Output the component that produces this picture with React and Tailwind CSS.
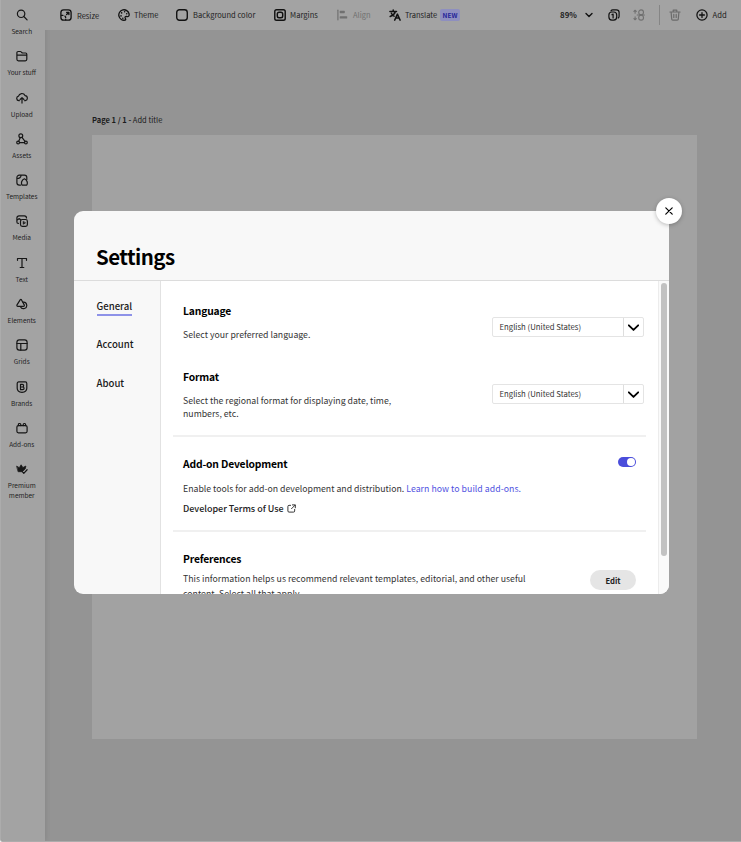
import React from "react";

const Svg = ({ children, className = "w-3 h-3", sw = 2 }) => (
  <svg viewBox="0 0 20 20" className={`${className} shrink-0`} fill="none" stroke="currentColor" strokeWidth={sw} strokeLinecap="round" strokeLinejoin="round">
    {children}
  </svg>
);

const icons = {
  search: <Svg><circle cx="8.500" cy="8" r="6.200" /><path d="M13 12.500l5.500 5.500" /></Svg>,
  folder: <Svg><path d="M1.500 15V4.500a2 2 0 0 1 2-2h3.600a2 2 0 0 1 1.500.7L10.500 5H16a2 2 0 0 1 2 2v8.500a2.500 2.500 0 0 1-2.500 2.500h-11.500a2.500 2.500 0 0 1-2.500-2.500zM1.500 8.500h16.500" /></Svg>,
  upload: <Svg><path d="M5.500 14.500H4.800a3.800 3.800 0 0 1-.6-7.500A5.700 5.700 0 0 1 15 6a4.300 4.300 0 0 1 .5 8.500H14.500M10 18.500V9.500M6.800 12.500L10 9.300 13.200 12.500" /></Svg>,
  assets: <Svg><circle cx="8" cy="4.500" r="3.200" /><circle cx="3.500" cy="16" r="2.300" /><circle cx="16.500" cy="16" r="2.300" /><path d="M7 7.800L4.500 13.800M10 7.300l5 6.500M6 16h8" /></Svg>,
  templates: <Svg><path d="M7.500 18.500H5.500a4 4 0 0 1-4-4V6a4 4 0 0 1 4-4h8.500a4 4 0 0 1 4 4v3M1.800 7.500c4 0 6.200-1.500 6.700-5.300" /><path d="M10 18.500c-2-4-.5-8.500 4-10.500 4.500 2 6 6.500 4 10.500z" /></Svg>,
  media: <Svg><path d="M4 14a2.500 2.500 0 0 1-2.500-2.500V5A3.500 3.500 0 0 1 5 1.500h9A3.500 3.500 0 0 1 17.500 5M2 8.500l3-2.500 3 2" /><rect x="7.500" y="7.500" width="11.500" height="11.500" rx="3" /><path d="M12 11v4.500l3.500-2.200z" fill="currentColor" strokeWidth="1" /></Svg>,
  text: <Svg><path d="M2.500 5.500V2.500h15v3M10 2.500v15M7 17.500h6" /></Svg>,
  elements: <Svg><path d="M7.200 2.800L1.700 11.500c-.7 1.300 0 2.500 1.500 2.500h9c1.500 0 2.200-1.200 1.500-2.500L9 2.800c-.5-.8-1.300-.8-1.800 0z" /><path d="M12 7a5.400 5.400 0 1 1-4.500 7.500" /></Svg>,
  grids: <Svg><rect x="1.500" y="1.500" width="17" height="17" rx="4" /><path d="M1.500 7.500h17M8 7.500v11" /></Svg>,
  brands: <Svg><path d="M2 4a2.500 2.500 0 0 1 2.500-2.500h11a2.500 2.500 0 0 1 2.500 2.500V12c0 4-4.500 6.500-8 7-3.500-.5-8-3-8-7z" /><path d="M7.500 5.500h3a2 2 0 0 1 0 4.500h-3zM7.500 10h3.700a2.200 2.200 0 0 1 0 4.500H7.500z" /></Svg>,
  addons: <Svg><rect x="1.500" y="6" width="17" height="12" rx="2.500" /><path d="M4 6V4a1.500 1.500 0 0 1 1.500-1.500h1A1.500 1.500 0 0 1 8 4v2M12 6V4a1.500 1.500 0 0 1 1.500-1.500h1A1.500 1.500 0 0 1 16 4v2" /></Svg>,
  premium: <Svg sw={1.2}><path d="M1.500 5.500l4 2.300L8.500 3l3 4.500L16.500 5l-1.200 5-5 4.500H4z" fill="currentColor" /><path d="M10.500 14.500l2.500 2.700 5.500-6" strokeWidth="2" /></Svg>,
};

const nav = [
  ["search", "Search"], ["folder", "Your stuff"], ["upload", "Upload"], ["assets", "Assets"],
  ["templates", "Templates"], ["media", "Media"], ["text", "Text"], ["elements", "Elements"],
  ["grids", "Grids"], ["brands", "Brands"], ["addons", "Add-ons"], ["premium", "Premium member"],
];

function Sidebar() {
  return (
    <nav className="flex h-full w-[44px] shrink-0 flex-col bg-[#a3a3a3] shadow-[1px_0_5px_rgba(0,0,0,0.09)]">
      {nav.map(([k, label]) => (
        <div key={k} className="flex h-[41.3px] shrink-0 flex-col items-center pt-[9px] pr-[2.5px] text-[#161616]">
          {icons[k]}
          <span className="mt-[5px] w-[40px] text-center text-[6.5px] leading-[10px] text-[#222]">{label}</span>
        </div>
      ))}
    </nav>
  );
}

function Toolbar() {
  const item = "flex shrink-0 items-center gap-1 whitespace-nowrap";
  return (
    <header className="flex h-[30px] shrink-0 items-center bg-[#a3a3a3] pl-[15px] text-[7.5px] leading-[12px] text-[#222]">
      <div className={`${item} w-[58px]`}>
        <Svg className="h-3 w-3 text-[#111]" sw={2.2}><rect x="1.500" y="1.500" width="17" height="17" rx="4.500" /><path d="M11 5.500h3.800v3.800M14.500 5.800l-3.500 3.500" /><path d="M2.500 10.500h2.500M8.200 11.800c1 .8 1.300 1.500 1.300 2.700M9.500 17.500v.5" /></Svg>
        <span className="relative top-[1px] pl-px">Resize</span>
      </div>
      <div className={`${item} w-[58px]`}>
        <Svg className="h-3 w-3 text-[#111]" sw={2.2}><path d="M18.500 8A8.700 8.700 0 1 0 12 18.500c1.500-.5.500-2.500 0-3.500-.8-2 .8-3 2.500-2.500 3 .8 4.500-1 4-4.500z" /><path d="M6 6.500h.1M11 4.500h.1M5 11.500h.1M8 15.500h.1M14.500 8h.1" strokeWidth="2.600" /></Svg>
        <span>Theme</span>
      </div>
      <div className={`${item} w-[98px]`}>
        <Svg className="h-3 w-3 text-[#111]" sw={2.3}><rect x="1.200" y="1.200" width="17.600" height="17.600" rx="4.500" /></Svg>
        <span className="pl-px tracking-[0.03px]">Background color</span>
      </div>
      <div className={`${item} w-[63px]`}>
        <Svg className="h-3 w-3 text-[#111]" sw={2.4}><rect x="1.300" y="1.300" width="17.400" height="17.400" rx="3" /><rect x="5.500" y="5.500" width="9" height="9" rx="3" /></Svg>
        <span className="tracking-[0.04px]">Margins</span>
      </div>
      <div className={`${item} w-[52px] text-[#707070]`}>
        <Svg className="h-3 w-3"><path d="M1.500 2v16" /><rect x="5.500" y="4" width="6.500" height="2" /><rect x="5.500" y="13" width="10.500" height="2" /></Svg>
        <span>Align</span>
      </div>
      <div className={`${item} w-[51px]`}>
        <Svg className="h-3 w-3 text-[#111]" sw={2.5}><path d="M1.500 4h11M7 1.500V4M10.500 4.500C9.500 8 6 11 2 12.500M4 7c1 2.500 2.500 4 4.500 5M9.500 18.500L14 8.500l4.500 10M11.200 15.200h5.600" /></Svg>
        <span>Translate</span>
      </div>
      <div className="flex h-3 w-5 items-center justify-center rounded-[2px] bg-[#8e8fc0] text-[6.500px] font-bold text-[#25259a]">NEW</div>
      <span className="ml-[100px] w-[25px] text-[7.900px] font-bold">89%</span>
      <Svg className="h-2 w-2 text-[#111]" sw={3.500}><path d="M2.500 6l7.500 7.500L17.500 6" /></Svg>
      <Svg className="ml-[15px] h-3 w-3 text-[#111]" sw={2}><rect x="1.500" y="5" width="13" height="13.500" rx="5" /><path d="M5 3a3.500 3.500 0 0 1 3-1.500h6A4.500 4.500 0 0 1 18.500 6v6a3.500 3.500 0 0 1-1.500 3M6.500 9.500L8.500 8.500v6.500" /></Svg>
      <Svg className="ml-[13px] h-3 w-3 text-[#707070]" sw={1.800}><path d="M3.500 2v5M1.500 4l2-2 2 2M3.500 13v5M1.500 16l2 2 2-2" /><circle cx="13.500" cy="5.500" r="4" /><circle cx="13.500" cy="14.500" r="4" /><path d="M7 10h12" /></Svg>
      <div className="ml-[14px] h-5 w-px bg-[#858585]" />
      <Svg className="ml-[9px] h-3 w-3 text-[#6b6b6b]"><path d="M1.500 5h17M7 5V2h6v3M3.500 5l1 11.500a2 2 0 0 0 2 2h7a2 2 0 0 0 2-2L16.500 5M8 9v5M12 9v5" /></Svg>
      <Svg className="ml-[15px] h-3 w-3 text-[#111]" sw={2.100}><circle cx="10" cy="10" r="8.500" /><path d="M10 6v8M6 10h8" /></Svg>
      <span className="ml-1 pl-[0.5px] text-[7.700px]">Add</span>
    </header>
  );
}

function Picker() {
  return (
    <div className="flex h-5 w-[152px] shrink-0 items-stretch rounded-[2px] border border-[#e4e4e4]">
      <span className="w-[130px] pl-[6.500px] text-[7.750px] leading-[17px] text-[#333]">English (United States)</span>
      <div className="w-px bg-[#dedede]" />
      <div className="flex flex-1 items-center justify-center pr-px text-black">
        <Svg className="h-[11px] w-[11px]" sw={3.300}><path d="M1.500 6l8.500 8.500L18.500 6" /></Svg>
      </div>
    </div>
  );
}

const H = ({ children }) => <h2 className="text-[10.300px] leading-[16px] font-bold tracking-[-0.160px] whitespace-nowrap text-black">{children}</h2>;

function Settings() {
  return (
    <section className="absolute top-[211px] left-[73px] h-[383px] w-[595px]">
      <div className="flex h-full w-full flex-col overflow-hidden rounded-[9px] bg-[#f8f8f8]">
        <h1 className="h-[70px] shrink-0 border-b border-b-[#dcdcdc] pt-[29.500px] pl-[22px] text-[20.500px] leading-[30px] font-bold tracking-[-0.550px] text-black">Settings</h1>
        <div className="flex min-h-0 flex-1">
          <div className="flex w-[87px] shrink-0 flex-col items-start border-r border-r-[#e2e2e2] pt-[17px] pl-[22.500px] text-[9.600px] leading-[16px] font-medium text-[#1a1a1a]">
            <div className="flex h-[18px] flex-col">
              <span className="h-[16px]">General</span>
              <span className="h-[2px] bg-[#8e92e8]" />
            </div>
            <span className="mt-[20px]">Account</span>
            <span className="mt-[23px]">About</span>
          </div>
          <div className="flex min-w-0 flex-1 flex-col overflow-hidden bg-white pl-[12px] text-[8.740px] leading-[13px] text-[#333]">
            <div className="flex h-[66px] shrink-0 justify-between pt-[22px] pr-[14px] pl-[10px]">
              <div>
                <H>Language</H>
                <p className="mt-[9px]">Select your preferred language.</p>
              </div>
              <div className="pt-[14px]"><Picker /></div>
            </div>
            <div className="flex h-[88px] shrink-0 justify-between pt-[22px] pr-[14px] pl-[10px]">
              <div>
                <H>Format</H>
                <p className="mt-[9px] whitespace-nowrap">Select the regional format for displaying date, time,<br />numbers, etc.</p>
              </div>
              <div className="pt-[15px]"><Picker /></div>
            </div>
            <div className="mr-[12px] h-[2px] shrink-0 bg-[#f0f0f0]" />
            <div className="flex h-[93px] shrink-0 justify-between pt-[19px] pr-[22px] pl-[10px]">
              <div>
                <H>Add-on Development</H>
                <p className="mt-[10px] whitespace-nowrap">Enable tools for add-on development and distribution. <a className="tracking-[0.040px] text-[#4f52df]">Learn how to build add-ons.</a></p>
                <div className="mt-[7px] flex items-center gap-[3px] text-[8.980px] font-medium text-[#222]">
                  <span>Developer Terms of Use</span>
                  <Svg className="h-[9px] w-[9px]" sw={2}><path d="M8 3H4.500A2.500 2.500 0 0 0 2 5.500v10A2.500 2.500 0 0 0 4.500 18h10a2.500 2.500 0 0 0 2.500-2.500V12M12 2h6.500v6.500M18 2.500l-8 8" /></Svg>
                </div>
              </div>
              <div className="mt-[1px] flex h-[10px] w-[18px] justify-end rounded-full bg-[#4a4ddb] p-px"><div className="h-2 w-2 rounded-full bg-white" /></div>
            </div>
            <div className="mr-[12px] h-[2px] shrink-0 bg-[#f0f0f0]" />
            <div className="flex h-[90px] shrink-0 justify-between pt-[19px] pr-[22px] pl-[10px]">
              <div>
                <H>Preferences</H>
                <p className="mt-[4px] leading-[15px] tracking-[0.010px] whitespace-nowrap">This information helps us recommend relevant templates, editorial, and other useful<br />content. Select all that apply.</p>
              </div>
              <button className="mt-[19px] flex h-5 w-[46px] items-center justify-center rounded-full bg-[#e5e5e5] text-[7.700px] font-bold text-[#222]">Edit</button>
            </div>
          </div>
          <div className="flex w-[11px] shrink-0 justify-center border-l border-l-[#ececec] bg-[#fafafa] pt-[2px]">
            <div className="h-[273px] w-[6px] rounded-full bg-[#c2c2c2]" />
          </div>
        </div>
      </div>
      <button className="absolute -top-[13px] left-[582px] flex h-[25.500px] w-[25.500px] items-center justify-center rounded-full bg-white text-black shadow-[0_1px_4px_rgba(0,0,0,0.25)]">
        <Svg className="h-2 w-2" sw={3}><path d="M2 2l16 16M18 2L2 18" /></Svg>
      </button>
    </section>
  );
}

export default function App() {
  return (
    <div className="relative flex h-[842px] w-[741px] overflow-hidden rounded-bl-[3px] border-b border-l border-[#acacac] bg-[#949494] font-['Noto_Sans_CJK_SC',sans-serif]">
      <Sidebar />
      <div className="flex min-w-0 flex-1 flex-col">
        <Toolbar />
        <main className="flex flex-1 flex-col pt-[84px] pl-[47px]">
          <p className="text-[7.500px] leading-[12px] text-[#1c1c1c]"><b>Page 1 / 1 -</b> Add title</p>
          <div className="mt-[9px] h-[603.500px] w-[605px] bg-[#a2a2a2]" />
        </main>
      </div>
      <Settings />
    </div>
  );
}
